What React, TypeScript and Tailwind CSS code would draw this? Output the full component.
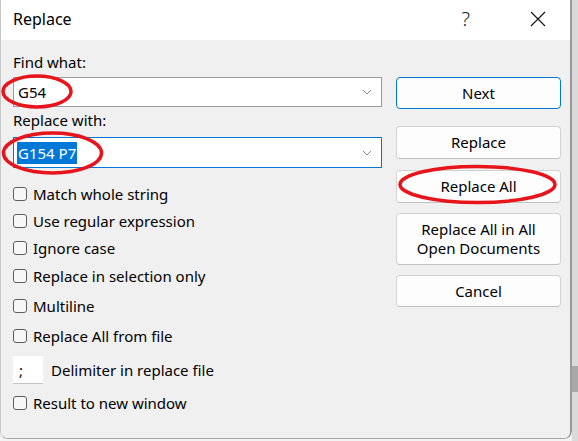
import React from 'react';

const checks = [
  { label: 'Match whole string', mt: 'mt-[16px]' },
  { label: 'Use regular expression', mt: 'mt-[7px]' },
  { label: 'Ignore case', mt: 'mt-[7px]' },
  { label: 'Replace in selection only', mt: 'mt-[8px]' },
  { label: 'Multiline', mt: 'mt-[10px]' },
  { label: 'Replace All from file', mt: 'mt-[10px]' },
];

const Chevron = () => (
  <svg width="10" height="6" viewBox="0 0 10 6" className="shrink-0">
    <path d="M1 1 L5 5 L9 1" fill="none" stroke="#8a8a8a" strokeWidth="1" />
  </svg>
);

const CheckRow: React.FC<{ label: string; className?: string }> = ({ label, className }) => (
  <div className={`flex h-[20px] items-center ${className ?? ''}`}>
    <div className="h-[14px] w-[14px] shrink-0 rounded-[3px] border border-[#5f5f5f] bg-[#f7f7f7]" />
    <span className="ml-[6px] leading-[20px]">{label}</span>
  </div>
);

const Button: React.FC<{ children: React.ReactNode; className?: string; primary?: boolean }> = ({
  children,
  className,
  primary,
}) => (
  <button
    type="button"
    className={`flex w-full items-center justify-center rounded-[4px] border bg-[#fdfdfd] text-center text-[15px] leading-[19px] text-black ${
      primary ? 'border-[#0078d4]' : 'border-[#d2d2d2] border-b-[#c2c2c2]'
    } ${className ?? ''}`}
  >
    {children}
  </button>
);

export default function App() {
  return (
    <div className="relative flex h-[441px] w-[578px] overflow-hidden bg-[#f3f3f3] font-['Noto_Sans',sans-serif] text-[15px] text-black">
      <div className="flex h-[439px] w-[572px] flex-col overflow-hidden rounded-b-[8px] border-b border-l border-r-2 border-b-[#a8a8a8] border-l-[#c6c6c6] border-r-[#9a9a9a]">
        {/* title bar */}
        <div className="flex h-[40px] shrink-0 items-center bg-white pb-[3px] pl-[12px]">
          <span className="text-[16px] leading-[20px]">Replace</span>
          <span className="ml-auto mr-[60px] text-[20px] font-light leading-[20px] text-[#1b1b1b]">?</span>
          <svg width="16" height="16" viewBox="0 0 16 16" className="mr-[24px]">
            <path d="M1 1 L15 15 M15 1 L1 15" stroke="#111" strokeWidth="1.1" />
          </svg>
        </div>

        {/* body */}
        <div className="flex flex-1 bg-[#f0f0f0] pl-[12px] pt-[12px]">
          <div className="flex w-[369px] flex-col">
            <div className="leading-[20px]">Find what:</div>
            <div className="mt-[5px] flex h-[30px] items-center border border-[#9b9b9b] bg-white pl-[4px] pr-[9px]">
              <span className="leading-[20px]">G54</span>
              <span className="ml-auto">
                <Chevron />
              </span>
            </div>
            <div className="mt-[3px] leading-[20px]">Replace with:</div>
            <div className="mt-[7px] flex h-[31px] items-center border border-[#0078d7] bg-white pl-[3px] pr-[9px]">
              <span className="bg-[#0078d7] px-[1px] leading-[22px] text-white">G154 P7</span>
              <span className="ml-auto">
                <Chevron />
              </span>
            </div>

            {checks.map((c) => (
              <CheckRow key={c.label} label={c.label} className={c.mt} />
            ))}

            <div className="mt-[10px] flex h-[28px] items-center">
              <div className="flex h-[28px] w-[30px] items-center border-b border-[#c4c4c4] bg-white pl-[6px] leading-[20px]">
                ;
              </div>
              <span className="ml-[8px] leading-[20px]">Delimiter in replace file</span>
            </div>

            <CheckRow label="Result to new window" className="mt-[9px]" />
          </div>

          <div className="ml-[14px] mt-[25px] flex w-[165px] flex-col">
            <Button primary className="h-[32px]">
              Next
            </Button>
            <Button className="mt-[17px] h-[33px]">Replace</Button>
            <Button className="mt-[11px] h-[33px]">Replace All</Button>
            <Button className="mt-[10px] h-[52px]">
              Replace All in All
              <br />
              Open Documents
            </Button>
            <Button className="mt-[10px] h-[32px]">Cancel</Button>
          </div>
        </div>
      </div>

      {/* outer scrollbar strip */}
      <div className="flex w-[6px] flex-col bg-[#dadada]">
        <div className="h-[366px]" />
        <div className="h-[26px] bg-[#a9a9a9]" />
      </div>

      {/* red annotation ellipses */}
      <svg className="pointer-events-none absolute inset-0" width="578" height="441">
        <ellipse cx="37" cy="91.5" rx="34" ry="15.5" fill="none" stroke="#e8141c" strokeWidth="3.5" />
        <ellipse cx="52.5" cy="153" rx="49" ry="20" fill="none" stroke="#e8141c" strokeWidth="3.5" />
        <ellipse cx="477.5" cy="184.5" rx="77.5" ry="18" fill="none" stroke="#e8141c" strokeWidth="3.5" />
      </svg>
    </div>
  );
}
